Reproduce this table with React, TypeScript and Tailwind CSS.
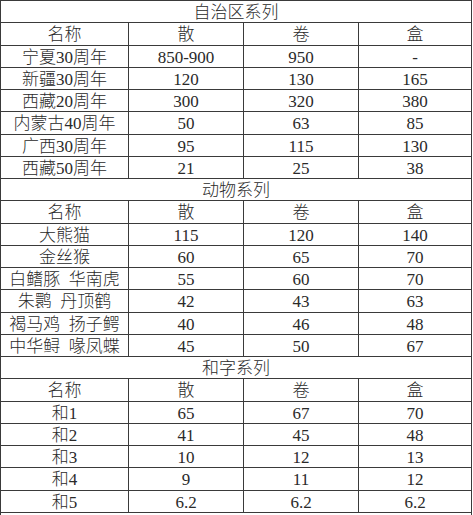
const sections = [
  {
    title: "自治区系列",
    rows: [
      ["宁夏30周年", "850-900", "950", "-"],
      ["新疆30周年", "120", "130", "165"],
      ["西藏20周年", "300", "320", "380"],
      ["内蒙古40周年", "50", "63", "85"],
      ["广西30周年", "95", "115", "130"],
      ["西藏50周年", "21", "25", "38"],
    ],
  },
  {
    title: "动物系列",
    rows: [
      ["大熊猫", "115", "120", "140"],
      ["金丝猴", "60", "65", "70"],
      ["白鳍豚  华南虎", "55", "60", "70"],
      ["朱鹮  丹顶鹤", "42", "43", "63"],
      ["褐马鸡  扬子鳄", "40", "46", "48"],
      ["中华鲟  喙凤蝶", "45", "50", "67"],
    ],
  },
  {
    title: "和字系列",
    rows: [
      ["和1", "65", "67", "70"],
      ["和2", "41", "45", "48"],
      ["和3", "10", "12", "13"],
      ["和4", "9", "11", "12"],
      ["和5", "6.2", "6.2", "6.2"],
    ],
  },
  {
    title: "生肖系列",
    rows: [],
  },
];

const head = ["名称", "散", "卷", "盒"];
const widths = ["w-[128px]", "w-[115px]", "w-[115px]", "w-[113px]"];

function Row({ cells }: { cells: string[] }) {
  return (
    <div className="flex h-[22.26px] border-b border-[#3a3a3a]">
      {cells.map((c, i) => (
        <div
          key={i}
          className={`${widths[i]} flex items-center justify-center border-r border-[#3a3a3a] pt-[2px] whitespace-pre`}
        >
          {c}
        </div>
      ))}
    </div>
  );
}

export default function App() {
  return (
    <div className="bg-white w-[473px] h-[515px] overflow-hidden">
      <div
        className="w-[472px] border-l border-t border-[#3a3a3a] text-[17px] font-light leading-none text-[#2a2a2a]"
        style={{ fontFamily: '"Liberation Serif", "Noto Sans CJK SC", serif' }}
      >
        {sections.map((s) => (
          <div key={s.title}>
            <div className="flex h-[22.26px] items-center justify-center border-b border-r border-[#3a3a3a] pt-[2px]">
              {s.title}
            </div>
            {s.rows.length > 0 && <Row cells={head} />}
            {s.rows.map((r) => (
              <Row key={r[0]} cells={r} />
            ))}
          </div>
        ))}
      </div>
    </div>
  );
}
